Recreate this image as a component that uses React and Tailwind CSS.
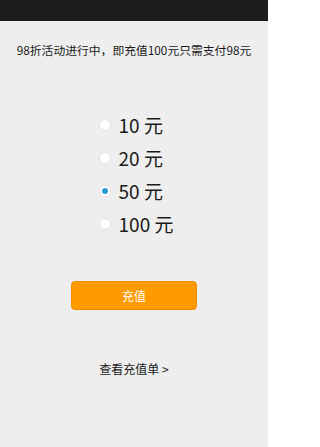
import { useState } from "react";

const amounts = [10, 20, 50, 100];

const Radio = ({ checked }) => (
  <span className="flex h-[12px] w-[12px] items-center justify-center rounded-full border border-[#e2e2e2] bg-white">
    {checked && <span className="h-[6px] w-[6px] rounded-full bg-[#2a9ad8]" />}
  </span>
);

export default function App() {
  const [selected, setSelected] = useState(50);

  return (
    <div
      className="flex h-[447px] w-[268px] flex-col bg-[#eeeeee] text-[#1a1a1a]"
      style={{ fontFamily: '"Noto Sans CJK SC", "Noto Sans", sans-serif' }}
    >
      <div className="h-[21px] bg-[#1c1c1c]" />

      <p className="mt-[20px] text-center text-[11.8px] leading-[18px]">
        98折活动进行中，即充值100元只需支付98元
      </p>

      {/* amounts */}
      <div className="mt-[49px] flex flex-col items-start self-center pl-[4px]">
        {amounts.map((a) => (
          <button
            key={a}
            onClick={() => setSelected(a)}
            className="flex h-[33px] items-center gap-[8px]"
          >
            <Radio checked={selected === a} />
            <span className="text-[19px] leading-none">{a} 元</span>
          </button>
        ))}
      </div>

      <button className="mx-auto mt-[41px] h-[29px] w-[126px] rounded-[4px] border border-[#ef8c00] bg-[#ff9a00] text-[12px] text-white">
        充值
      </button>

      <p className="mt-[51px] text-center text-[12px] leading-[16px]">
        查看充值单 &gt;
      </p>
    </div>
  );
}
